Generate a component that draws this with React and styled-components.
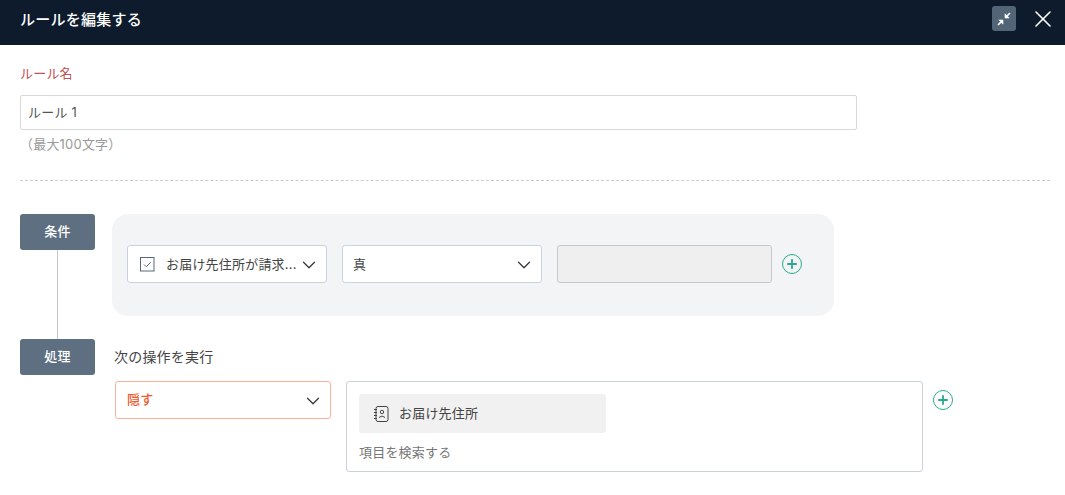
import React from "react";
import styled, { createGlobalStyle } from "styled-components";
import { ChevronDown, Plus, X } from "lucide-react";

const GlobalStyle = createGlobalStyle`
  html, body {
    margin: 0;
    padding: 0;
    background: #fff;
    font-family: Inter, "Noto Sans CJK JP", sans-serif;
    letter-spacing: 0.2px;
    overflow: hidden;
  }
  * { box-sizing: border-box; }
`;

const Page = styled.div`
  width: 1065px;
  height: 495px;
  overflow: hidden;
`;

const Header = styled.header`
  height: 45px;
  background: #0d1b2c;
  display: flex;
  align-items: center;
  justify-content: space-between;
  padding: 0 8px 8px 20px;
`;

const Title = styled.h1`
  margin: 0;
  font-size: 15px;
  font-weight: 500;
  letter-spacing: 0.25px;
  color: #fff;
`;

const HeaderActions = styled.div`
  display: flex;
  align-items: center;
  gap: 13px;
`;

const CollapseButton = styled.div`
  width: 24px;
  height: 25px;
  border-radius: 3px;
  background: #526576;
  display: flex;
  align-items: center;
  justify-content: center;
`;

const Body = styled.main`
  padding: 19px 15px 0 20px;
`;

const FieldLabel = styled.div`
  font-size: 13px;
  line-height: 18px;
  color: #bf5252;
  margin-bottom: 13px;
`;

const NameInput = styled.div`
  width: 837px;
  height: 35px;
  border: 1px solid #d9d9d9;
  border-radius: 2px;
  padding: 0 7px 2px;
  display: flex;
  align-items: center;
  font-size: 13px;
  color: #555;
`;

const Hint = styled.div`
  font-size: 13px;
  line-height: 18px;
  color: #999;
  margin-top: 5px;
  margin-bottom: 27px;
`;

const Divider = styled.hr`
  margin: 0 0 33px;
  border: 0;
  border-top: 1px dashed #ccc;
`;

const RuleRow = styled.section`
  display: flex;
  gap: 17px;
`;

const StepColumn = styled.div`
  width: 75px;
  flex: none;
  display: flex;
  flex-direction: column;
  align-items: center;
`;

const StepBadge = styled.div`
  width: 75px;
  height: 36px;
  flex: none;
  border-radius: 3px;
  background: #5d6f80;
  color: #fff;
  font-size: 13px;
  font-weight: 500;
  padding-bottom: 4px;
  display: flex;
  align-items: center;
  justify-content: center;
`;

const Connector = styled.div`
  flex: 1;
  width: 1px;
  background: #c8c8c8;
  margin-right: 1px;
`;

const ConditionPanel = styled.div`
  width: 722px;
  height: 102px;
  margin-bottom: 23px;
  border-radius: 16px;
  background: #f2f4f6;
  padding: 31px 0 0 15px;
  display: flex;
  align-items: flex-start;
`;

const Select = styled.div`
  width: ${(p) => p.$width}px;
  height: 38px;
  margin-right: ${(p) => p.$after || 0}px;
  flex: none;
  background: #fff;
  border: 1px solid ${(p) => (p.$accent ? "#ffb199" : "#c9d3df")};
  border-radius: 3px;
  padding: 0 6px ${(p) => (p.$accent ? 3 : 2)}px ${(p) => p.$padLeft || 10}px;
  display: flex;
  align-items: center;
  font-size: 13px;
  font-weight: ${(p) => (p.$accent ? 500 : 400)};
  color: ${(p) => (p.$accent ? "#f2592a" : "#444")};

  svg:last-child {
    margin-bottom: -4px;
    flex: none;
  }
`;

const SelectText = styled.span`
  flex: 1;
  min-width: 0;
  white-space: nowrap;
`;

const DisabledInput = styled.div`
  width: 215px;
  height: 38px;
  flex: none;
  background: #efefef;
  border: 1px solid #c9c9c9;
  border-radius: 3px;
`;

const AddButton = styled.div`
  width: 20px;
  height: 20px;
  flex: none;
  margin: 9px 0 0 10px;
  border: 1px solid #2bab8e;
  border-radius: 50%;
  color: #2bab8e;
  display: flex;
  align-items: center;
  justify-content: center;
`;

const ActionArea = styled.div`
  flex: 1;
  min-width: 0;
`;

const ActionTitle = styled.div`
  font-size: 14px;
  line-height: 18px;
  color: #444;
  margin: 9px 0 15px 2px;
`;

const ActionControls = styled.div`
  display: flex;
  align-items: flex-start;
  padding-left: 3px;
`;

const TargetBox = styled.div`
  width: 577px;
  height: 91px;
  flex: none;
  border: 1px solid #c9d3df;
  border-radius: 3px;
  padding: 12px 12px 0;
`;

const TargetChip = styled.div`
  width: 247px;
  height: 39px;
  border-radius: 3px;
  background: #f1f1f1;
  padding: 0 0 2px 14px;
  display: flex;
  align-items: center;
  gap: 10px;
  font-size: 13px;
  color: #444;
`;

const SearchHint = styled.div`
  margin-top: 10px;
  font-size: 13px;
  line-height: 18px;
  color: #777;
`;

const CompressIcon = () => (
  <svg width="16" height="16" viewBox="0 0 16 16" fill="none" stroke="#fff">
    <path d="M9.5 6.5 L14 2" strokeWidth="1.6" />
    <path d="M9 2.8 V7 H13.2 Z" fill="#fff" strokeWidth="0.6" />
    <path d="M6.5 9.5 L2 14" strokeWidth="1.6" />
    <path d="M7 13.2 V9 H2.8 Z" fill="#fff" strokeWidth="0.6" />
  </svg>
);

const CheckboxIcon = () => (
  <svg width="15" height="15" viewBox="0 0 15 15" fill="none" style={{ flex: "none", marginRight: 11, marginBottom: -2 }}>
    <rect x="0.5" y="0.5" width="13.5" height="13.5" stroke="#5b6478" />
    <path d="M4 7.5 L6.3 9.8 L10.6 5.2" stroke="#5b6478" />
  </svg>
);

const AddressBookIcon = () => (
  <svg width="16" height="18" viewBox="0 0 16 18" fill="none" stroke="#444" style={{ flex: "none", marginBottom: -2 }}>
    <path d="M3 3.5 Q3 1.5 5 1.5 H13 Q15 1.5 15 3.5 V14.5 Q15 16.5 13 16.5 H5 Q3 16.5 3 14.5 Z" />
    <path d="M1 4.5 H4 M1 7.5 H4 M1 10.5 H4 M1 13.5 H4" />
    <circle cx="9" cy="7" r="1.7" />
    <path d="M6 12.5 Q9 9.5 12 12.5" />
  </svg>
);

const Chevron = () => <ChevronDown size={22} color="#333" strokeWidth={1.3} />;

const AddIcon = () => <Plus size={14} strokeWidth={3.2} />;

export default function App() {
  return (
    <Page>
      <GlobalStyle />
      <Header>
        <Title>ルールを編集する</Title>
        <HeaderActions>
          <CollapseButton>
            <CompressIcon />
          </CollapseButton>
          <X size={28} color="#fff" strokeWidth={1.4} />
        </HeaderActions>
      </Header>
      <Body>
        <FieldLabel>ルール名</FieldLabel>
        <NameInput>ルール 1</NameInput>
        <Hint>（最大100文字）</Hint>
        <Divider />
        <RuleRow>
          <StepColumn>
            <StepBadge>条件</StepBadge>
            <Connector />
          </StepColumn>
          <ConditionPanel>
            <Select $width={200} $after={15} $padLeft={12}>
              <CheckboxIcon />
              <SelectText>お届け先住所が請求...</SelectText>
              <Chevron />
            </Select>
            <Select $width={200} $after={15}>
              <SelectText>真</SelectText>
              <Chevron />
            </Select>
            <DisabledInput />
            <AddButton>
              <AddIcon />
            </AddButton>
          </ConditionPanel>
        </RuleRow>
        <RuleRow>
          <StepColumn>
            <StepBadge>処理</StepBadge>
          </StepColumn>
          <ActionArea>
            <ActionTitle>次の操作を実行</ActionTitle>
            <ActionControls>
              <Select $width={216} $after={15} $accent $padLeft={11}>
                <SelectText>隠す</SelectText>
                <Chevron />
              </Select>
              <TargetBox>
                <TargetChip>
                  <AddressBookIcon />
                  お届け先住所
                </TargetChip>
                <SearchHint>項目を検索する</SearchHint>
              </TargetBox>
              <AddButton>
                <AddIcon />
              </AddButton>
            </ActionControls>
          </ActionArea>
        </RuleRow>
      </Body>
    </Page>
  );
}
